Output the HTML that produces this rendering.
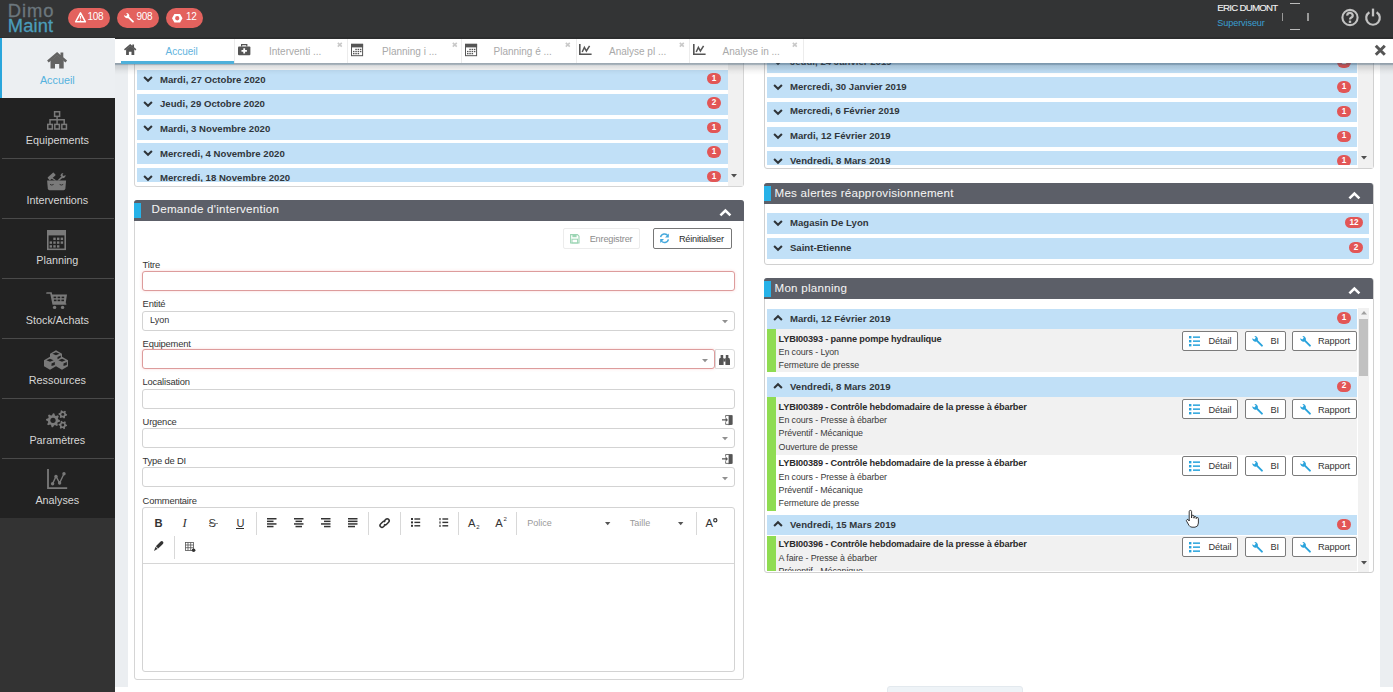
<!DOCTYPE html><html><head><meta charset="utf-8"><style>
*{box-sizing:border-box;margin:0;padding:0}
html,body{width:1393px;height:692px;overflow:hidden;background:#fff;font-family:"Liberation Sans",sans-serif;color:#333}
.a{position:absolute}
svg{position:absolute;overflow:visible}
.nw{white-space:nowrap}
#hdr{left:0;top:0;width:1393px;height:38px;background:#323334}
#side{left:0;top:38px;width:114px;height:654px;background:#333}
.nav{position:absolute;left:0;width:114px;height:60px;background:#222;color:#dcdcdc;font-size:10.6px;text-align:center}
.nav .lbl{position:absolute;left:0;width:114px;top:37px;line-height:12px}
.nav .sep{position:absolute;left:2px;right:0;top:0;height:1px;background:#4b4b4b}
#wrap{left:114px;top:38px;width:1279px;height:649px;background:#ebeef1}
#content{left:128px;top:38px;width:1252px;height:649px;background:#fff}
.panel{position:absolute;border:1px solid #d4d4d4;border-radius:3px;background:#fff}
.ph{position:absolute;height:21px;background:#5b5e67;border-radius:3px 3px 0 0;color:#fff;font-size:12.3px}
.ph .acc{position:absolute;left:0;top:2px;width:7px;height:17px;background:#27b1e6}
.ph .t{position:absolute;left:17px;top:3px;line-height:14px;white-space:nowrap}
.row{position:absolute;height:20.5px;background:#c0e0f7;color:#2f3438;font-weight:bold;font-size:10px;letter-spacing:-0.2px}
.row .t{position:absolute;left:23px;top:4px;line-height:12px;white-space:nowrap}
.badge{position:absolute;height:11px;border-radius:6px;background:#e25656;color:#fff;font-size:8px;font-weight:bold;text-align:center;line-height:11px;letter-spacing:0}
.lab{position:absolute;font-size:9px;color:#333;line-height:10px;white-space:nowrap}
.inp{position:absolute;height:19.5px;border:1px solid #d0d0d0;border-radius:3px;background:#fff}
.inp.red{border-color:#ec8f8f}
.btn{position:absolute;height:20px;border:1px solid #777;border-radius:2px;background:#fff;font-size:9px;color:#333;white-space:nowrap}
.it{position:absolute;font-size:8.9px;color:#333;line-height:13px;white-space:nowrap}
.it b{font-weight:bold}
.tab{position:absolute;top:0;height:25px;width:113.5px;border-right:1px solid #e6e6e6}
.tab .t{position:absolute;top:7px;font-size:10.2px;color:#aaa;white-space:nowrap;line-height:12px}
</style></head><body>
<div id="wrap" class="a"></div><div id="content" class="a"></div>
<div class="a" style="left:0px;top:0px;width:1393px;height:39px;background:#333435"></div>
<div class="a" style="left:0px;top:37.2px;width:1393px;height:1.8px;background:#2c2d2e"></div>
<div class="a nw " style="left:7.8px;top:1.82px;font-size:18.4px;line-height:18.4px;color:#6c777d;letter-spacing:0.95px;-webkit-text-stroke:0.3px #6c777d">Dimo</div>
<div class="a nw " style="left:7.8px;top:17.01px;font-size:18.3px;line-height:18.3px;color:#4b9dbb;letter-spacing:0.15px;-webkit-text-stroke:0.3px #4b9dbb">Maint</div>
<div class="a" style="left:68px;top:8px;width:42px;height:20px;background:#e3625e;border-radius:10px"></div>
<div class="a" style="left:117px;top:8px;width:42px;height:20px;background:#e3625e;border-radius:10px"></div>
<div class="a" style="left:166px;top:8px;width:37px;height:20px;background:#e3625e;border-radius:10px"></div>
<div class="a nw " style="left:87.6px;top:12.43px;font-size:10px;line-height:10px;color:#fff;letter-spacing:-0.3px">108</div>
<div class="a nw " style="left:136.5px;top:12.43px;font-size:10px;line-height:10px;color:#fff;letter-spacing:-0.3px">908</div>
<div class="a nw " style="left:186.1px;top:12.43px;font-size:10px;line-height:10px;color:#fff;letter-spacing:-0.3px">12</div>
<svg style="left:74.5px;top:12.2px;" width="11" height="10.5" viewBox="0 0 11 10.5"><path d="M5.5 0.8 L10.4 9.8 L0.6 9.8 Z" fill="none" stroke="#fff" stroke-width="1.5" stroke-linejoin="round"/><path d="M5.5 3.8 V6.8 M5.5 7.8 V8.8" stroke="#fff" stroke-width="1.2"/></svg>
<svg style="left:123px;top:11.5px;" width="11.5" height="11.5" viewBox="0 0 12 12"><path d="M1.2 3.2 A3 3 0 0 0 5.2 6.2 L10 11 A1 1 0 0 0 11.3 9.7 L6.5 4.9 A3 3 0 0 0 3.2 1 L4.6 2.6 L3.2 4.4 Z" fill="#fff"/></svg>
<svg style="left:172.2px;top:13.5px;" width="10.5" height="8.5" viewBox="0 0 10.5 8.5"><path fill-rule="evenodd" d="M2.4 0 H8.1 L10.5 4.25 L8.1 8.5 H2.4 L0 4.25 Z M5.25 2.1 A2.15 2.15 0 1 0 5.25 6.4 A2.15 2.15 0 1 0 5.25 2.1 Z" fill="#fff"/></svg>
<div class="a nw " style="left:1217.3px;top:2.69px;font-size:9.7px;line-height:9.7px;color:#f2f2f2;letter-spacing:-0.75px;-webkit-text-stroke:0.12px #f2f2f2">ERIC DUMONT</div>
<div class="a nw " style="left:1217.3px;top:18.90px;font-size:9.1px;line-height:9.1px;color:#3a9fd2;letter-spacing:-0.1px">Superviseur</div>
<div class="a" style="left:1290px;top:2.6px;width:9.5px;height:1.4px;background:#bbb"></div>
<div class="a" style="left:1290px;top:28.8px;width:9.5px;height:1.4px;background:#bbb"></div>
<div class="a" style="left:1281.9px;top:13px;width:1.3px;height:8px;background:#999"></div>
<div class="a" style="left:1307.3px;top:13px;width:1.3px;height:8px;background:#999"></div>
<svg style="left:1341px;top:8.6px;" width="18" height="17" viewBox="0 0 18 17"><circle cx="9" cy="8.5" r="7.6" fill="none" stroke="#c2c2c2" stroke-width="2.1"/><path d="M6.3 6.6 A2.7 2.5 0 1 1 10 8.7 Q9 9.3 9 10.6" fill="none" stroke="#c2c2c2" stroke-width="2.2"/><rect x="7.8" y="11.6" width="2.4" height="2.3" fill="#c2c2c2"/></svg>
<svg style="left:1364.6px;top:8.4px;" width="16" height="17" viewBox="0 0 16 17"><path d="M4.4 4.2 A6.8 6.8 0 1 0 11.6 4.2" fill="none" stroke="#c2c2c2" stroke-width="2.2"/><path d="M8 0.6 V8.4" stroke="#c2c2c2" stroke-width="2.3"/></svg>
<div class="a" style="left:0px;top:38px;width:114.6px;height:654px;background:#333"></div>
<div class="a" style="left:0px;top:38px;width:114.6px;height:60px;background:#eceff2"></div>
<div class="a" style="left:0px;top:38px;width:1.5px;height:60px;background:#2aa6dc"></div>
<div class="a nw" style="left:-42.70px;width:200px;text-align:center;top:75.06px;font-size:10.8px;line-height:10.8px;color:#55b2de;letter-spacing:0px">Accueil</div>
<div class="a" style="left:0px;top:98px;width:114.6px;height:60px;background:#222"></div>
<div class="a nw" style="left:-42.70px;width:200px;text-align:center;top:135.06px;font-size:10.8px;line-height:10.8px;color:#d6d6d6;letter-spacing:0px">Equipements</div>
<div class="a" style="left:0px;top:158px;width:114.6px;height:60px;background:#222"></div>
<div class="a" style="left:2px;top:158px;width:112px;height:1px;background:#4a4a4a"></div>
<div class="a nw" style="left:-42.70px;width:200px;text-align:center;top:195.06px;font-size:10.8px;line-height:10.8px;color:#d6d6d6;letter-spacing:0px">Interventions</div>
<div class="a" style="left:0px;top:218px;width:114.6px;height:60px;background:#222"></div>
<div class="a" style="left:2px;top:218px;width:112px;height:1px;background:#4a4a4a"></div>
<div class="a nw" style="left:-42.70px;width:200px;text-align:center;top:255.06px;font-size:10.8px;line-height:10.8px;color:#d6d6d6;letter-spacing:0px">Planning</div>
<div class="a" style="left:0px;top:278px;width:114.6px;height:60px;background:#222"></div>
<div class="a" style="left:2px;top:278px;width:112px;height:1px;background:#4a4a4a"></div>
<div class="a nw" style="left:-42.70px;width:200px;text-align:center;top:315.06px;font-size:10.8px;line-height:10.8px;color:#d6d6d6;letter-spacing:0px">Stock/Achats</div>
<div class="a" style="left:0px;top:338px;width:114.6px;height:60px;background:#222"></div>
<div class="a" style="left:2px;top:338px;width:112px;height:1px;background:#4a4a4a"></div>
<div class="a nw" style="left:-42.70px;width:200px;text-align:center;top:375.06px;font-size:10.8px;line-height:10.8px;color:#d6d6d6;letter-spacing:0px">Ressources</div>
<div class="a" style="left:0px;top:398px;width:114.6px;height:60px;background:#222"></div>
<div class="a" style="left:2px;top:398px;width:112px;height:1px;background:#4a4a4a"></div>
<div class="a nw" style="left:-42.70px;width:200px;text-align:center;top:435.06px;font-size:10.8px;line-height:10.8px;color:#d6d6d6;letter-spacing:0px">Paramètres</div>
<div class="a" style="left:0px;top:458px;width:114.6px;height:60px;background:#222"></div>
<div class="a" style="left:2px;top:458px;width:112px;height:1px;background:#4a4a4a"></div>
<div class="a nw" style="left:-42.70px;width:200px;text-align:center;top:495.06px;font-size:10.8px;line-height:10.8px;color:#d6d6d6;letter-spacing:0px">Analyses</div>
<svg style="left:46.6px;top:51.9px;" width="20.2" height="16.6" viewBox="0 0 20 16.6"><path d="M0 8.6 L10 0 L13.4 2.9 V0.6 H16.2 V5.3 L20 8.6 L18.4 10.4 L10 3.4 L1.6 10.4 Z" fill="#636363"/><path d="M3.4 8.4 L10 2.9 L16.6 8.4 V16.6 H12.1 V12 H7.9 V16.6 H3.4 Z" fill="#636363"/></svg>
<svg style="left:46.7px;top:110.9px;" width="20.2" height="18.8" viewBox="0 0 20.2 18.8"><g fill="none" stroke="#7a7a7a" stroke-width="1.5"><rect x="7.6" y="0.75" width="5" height="4.6"/><rect x="0.75" y="13.4" width="4.6" height="4.6"/><rect x="7.8" y="13.4" width="4.6" height="4.6"/><rect x="14.85" y="13.4" width="4.6" height="4.6"/><path d="M10.1 5.4 V13.4 M3 13.4 V8.8 H17.2 V13.4"/></g></svg>
<svg style="left:47px;top:172.8px;" width="19.2" height="17.2" viewBox="0 0 19.2 17.2"><path d="M0.1 7.6 H19.1 L18.4 15.6 Q18.2 17.2 16.6 17.2 H2.6 Q1 17.2 0.8 15.6 Z" fill="#7a7a7a"/><path d="M3 11.4 Q4.8 12.8 6.6 11.4 M12.6 11.4 Q14.4 12.8 16.2 11.4" fill="none" stroke="#2a2a2a" stroke-width="0.9"/><g transform="rotate(-42 4.6 3.4)"><rect x="0.6" y="1.6" width="8" height="3.6" rx="0.6" fill="#7a7a7a"/></g><path d="M5.2 4.4 L9.4 7.6 L7.6 7.6 L4 5.2 Z" fill="#7a7a7a"/><path d="M10.4 7.6 L14.4 3.6 L15.6 4.8 L12.4 7.6 Z" fill="#7a7a7a"/><path d="M13.4 2.6 A2.9 2.9 0 0 1 16.4 0 L15.4 1.9 L16.6 3.1 L18.6 2 A2.9 2.9 0 0 1 15.6 5.2 Z" fill="#7a7a7a"/></svg>
<svg style="left:46.7px;top:229.9px;" width="19" height="20.1" viewBox="0 0 19 20.1"><rect x="0.8" y="0.8" width="17.4" height="18.5" fill="none" stroke="#7a7a7a" stroke-width="1.6"/><rect x="0" y="0.8" width="19" height="4.6" fill="#7a7a7a"/><rect x="6.3" y="7.6" width="2.4" height="2.4" fill="#7a7a7a"/><rect x="10.0" y="7.6" width="2.4" height="2.4" fill="#7a7a7a"/><rect x="13.7" y="7.6" width="2.4" height="2.4" fill="#7a7a7a"/><rect x="2.6" y="11.4" width="2.4" height="2.4" fill="#7a7a7a"/><rect x="6.3" y="11.4" width="2.4" height="2.4" fill="#7a7a7a"/><rect x="10.0" y="11.4" width="2.4" height="2.4" fill="#7a7a7a"/><rect x="13.7" y="11.4" width="2.4" height="2.4" fill="#7a7a7a"/><rect x="2.6" y="15.2" width="2.4" height="2.4" fill="#7a7a7a"/><rect x="6.3" y="15.2" width="2.4" height="2.4" fill="#7a7a7a"/><rect x="10.0" y="15.2" width="2.4" height="2.4" fill="#7a7a7a"/></svg>
<svg style="left:46.7px;top:291.8px;" width="20.2" height="17.2" viewBox="0 0 20.2 17.2"><path d="M0 1 H4 L6.2 12 H18.6" fill="none" stroke="#7a7a7a" stroke-width="1.7" stroke-linecap="round"/><path d="M4.6 2.6 H20 L18.6 12 H6.4 Z" fill="#7a7a7a"/><g fill="#222"><rect x="6.6" y="4.6" width="2.6" height="1.6"/><rect x="10.6" y="4.6" width="2.6" height="1.6"/><rect x="14.6" y="4.6" width="2.6" height="1.6"/><rect x="6.9" y="7.6" width="2.6" height="1.6"/><rect x="10.6" y="7.6" width="2.6" height="1.6"/><rect x="14.4" y="7.6" width="2.6" height="1.6"/></g><circle cx="7.6" cy="15.4" r="1.7" fill="#7a7a7a"/><circle cx="15.6" cy="15.4" r="1.7" fill="#7a7a7a"/></svg>
<svg style="left:44.1px;top:349.6px;" width="24.1" height="20.1" viewBox="0 0 24.1 20.1"><path d="M12 0.3 L18 3.7799999999999994 L18 9.78 L12 13.259999999999998 L6 9.78 L6 3.7799999999999994 Z" fill="#7a7a7a"/><path d="M12 2.214 L15.6 3.7799999999999994 L12 5.345999999999999 L8.4 3.7799999999999994 Z" fill="#222"/><path d="M13.5 6.911999999999999 L16.8 5.519999999999999 L16.8 8.58 L13.5 9.575999999999999 Z" fill="#222"/><path d="M6 6.8 L12 10.28 L12 16.28 L6 19.759999999999998 L0 16.28 L0 10.28 Z" fill="#7a7a7a"/><path d="M6 8.714 L9.6 10.28 L6 11.846 L2.4000000000000004 10.28 Z" fill="#222"/><path d="M7.5 13.411999999999999 L10.8 12.02 L10.8 15.08 L7.5 16.076 Z" fill="#222"/><path d="M18 6.8 L24 10.28 L24 16.28 L18 19.759999999999998 L12 16.28 L12 10.28 Z" fill="#7a7a7a"/><path d="M18 8.714 L21.6 10.28 L18 11.846 L14.4 10.28 Z" fill="#222"/><path d="M19.5 13.411999999999999 L22.8 12.02 L22.8 15.08 L19.5 16.076 Z" fill="#222"/></svg>
<svg style="left:46px;top:410.2px;" width="21.2" height="19.5" viewBox="0 0 21.2 19.5"><path d="M14.00 10.30 L13.87 11.67 L11.80 12.29 L11.32 13.19 L11.95 15.25 L10.89 16.12 L8.99 15.10 L8.01 15.40 L7.00 17.30 L5.63 17.17 L5.01 15.10 L4.11 14.62 L2.05 15.25 L1.18 14.19 L2.20 12.29 L1.90 11.31 L0.00 10.30 L0.13 8.93 L2.20 8.31 L2.68 7.41 L2.05 5.35 L3.11 4.48 L5.01 5.50 L5.99 5.20 L7.00 3.30 L8.37 3.43 L8.99 5.50 L9.89 5.98 L11.95 5.35 L12.82 6.41 L11.80 8.31 L12.10 9.29 Z" fill="#7a7a7a"/><circle cx="7" cy="10.3" r="2.6" fill="#222"/><path d="M21.10 4.40 L20.95 5.51 L19.48 5.95 L18.99 6.59 L18.95 8.12 L17.91 8.55 L16.80 7.50 L16.00 7.39 L14.65 8.12 L13.76 7.44 L14.12 5.95 L13.81 5.20 L12.50 4.40 L12.65 3.29 L14.12 2.85 L14.61 2.21 L14.65 0.68 L15.69 0.25 L16.80 1.30 L17.60 1.41 L18.95 0.68 L19.84 1.36 L19.48 2.85 L19.79 3.60 Z" fill="#7a7a7a"/><circle cx="16.8" cy="4.4" r="1.4" fill="#222"/><path d="M21.10 15.00 L20.95 16.11 L19.48 16.55 L18.99 17.19 L18.95 18.72 L17.91 19.15 L16.80 18.10 L16.00 17.99 L14.65 18.72 L13.76 18.04 L14.12 16.55 L13.81 15.80 L12.50 15.00 L12.65 13.89 L14.12 13.45 L14.61 12.81 L14.65 11.28 L15.69 10.85 L16.80 11.90 L17.60 12.01 L18.95 11.28 L19.84 11.96 L19.48 13.45 L19.79 14.20 Z" fill="#7a7a7a"/><circle cx="16.8" cy="15" r="1.4" fill="#222"/></svg>
<svg style="left:46.7px;top:468.9px;" width="20.2" height="20.1" viewBox="0 0 20.2 20.1"><path d="M1 0 V19.1 H20.2" fill="none" stroke="#7a7a7a" stroke-width="1.8"/><path d="M5.6 14.8 L9 7.4 L12.6 14 L17 4.8" fill="none" stroke="#7a7a7a" stroke-width="1.4"/><g fill="#7a7a7a"><circle cx="5.6" cy="14.8" r="1.7"/><circle cx="9" cy="7.4" r="1.7"/><circle cx="12.6" cy="14" r="1.7"/><circle cx="17" cy="4.8" r="1.7"/></g></svg>
<div class="a" style="left:134px;top:40px;width:610px;height:146.5px;border:1px solid #d5d5d5;border-radius:3px;background:#fff"></div>
<div class="a" style="left:728px;top:40px;width:15px;height:146px;background:#f1f1f1"></div>
<svg style="left:730.5px;top:173.5px;" width="6" height="4" viewBox="0 0 6 4"><path d="M0 0 H6 L3 3.5 Z" fill="#505050"/></svg>
<div class="a" style="left:135px;top:40px;width:593px;height:142.4px;overflow:hidden">
<div class="a" style="left:1.8px;top:29.599999999999994px;width:591.2px;height:20.9px;background:#c1e0f7"></div>
<svg style="left:8.4px;top:36.199999999999996px;" width="10" height="6" viewBox="0 0 10 6"><path d="M1.1 1.1 L5 4.7 L8.9 1.1" fill="none" stroke="#2f3438" stroke-width="2.1"/></svg>
<div class="a nw " style="left:25.0px;top:34.87px;font-size:9.6px;line-height:9.6px;color:#30363b;font-weight:bold;letter-spacing:0.02px">Mardi, 27 Octobre 2020</div>
<div class="a" style="left:572.0px;top:32.65px;width:14px;height:11.4px;background:#e25656;border-radius:6px"></div>
<div class="a nw" style="left:569.00px;width:20px;text-align:center;top:34.51px;font-size:8.2px;line-height:8.2px;color:#fff;font-weight:bold">1</div>
<div class="a" style="left:1.8px;top:54.19999999999999px;width:591.2px;height:20.9px;background:#c1e0f7"></div>
<svg style="left:8.4px;top:60.79999999999999px;" width="10" height="6" viewBox="0 0 10 6"><path d="M1.1 1.1 L5 4.7 L8.9 1.1" fill="none" stroke="#2f3438" stroke-width="2.1"/></svg>
<div class="a nw " style="left:25.0px;top:59.47px;font-size:9.6px;line-height:9.6px;color:#30363b;font-weight:bold;letter-spacing:0.02px">Jeudi, 29 Octobre 2020</div>
<div class="a" style="left:572.0px;top:57.25px;width:14px;height:11.4px;background:#e25656;border-radius:6px"></div>
<div class="a nw" style="left:569.00px;width:20px;text-align:center;top:59.11px;font-size:8.2px;line-height:8.2px;color:#fff;font-weight:bold">2</div>
<div class="a" style="left:1.8px;top:78.8px;width:591.2px;height:20.9px;background:#c1e0f7"></div>
<svg style="left:8.4px;top:85.39999999999999px;" width="10" height="6" viewBox="0 0 10 6"><path d="M1.1 1.1 L5 4.7 L8.9 1.1" fill="none" stroke="#2f3438" stroke-width="2.1"/></svg>
<div class="a nw " style="left:25.0px;top:84.07px;font-size:9.6px;line-height:9.6px;color:#30363b;font-weight:bold;letter-spacing:0.02px">Mardi, 3 Novembre 2020</div>
<div class="a" style="left:572.0px;top:81.85px;width:14px;height:11.4px;background:#e25656;border-radius:6px"></div>
<div class="a nw" style="left:569.00px;width:20px;text-align:center;top:83.71px;font-size:8.2px;line-height:8.2px;color:#fff;font-weight:bold">1</div>
<div class="a" style="left:1.8px;top:103.4px;width:591.2px;height:20.9px;background:#c1e0f7"></div>
<svg style="left:8.4px;top:110.0px;" width="10" height="6" viewBox="0 0 10 6"><path d="M1.1 1.1 L5 4.7 L8.9 1.1" fill="none" stroke="#2f3438" stroke-width="2.1"/></svg>
<div class="a nw " style="left:25.0px;top:108.67px;font-size:9.6px;line-height:9.6px;color:#30363b;font-weight:bold;letter-spacing:0.02px">Mercredi, 4 Novembre 2020</div>
<div class="a" style="left:572.0px;top:106.45px;width:14px;height:11.4px;background:#e25656;border-radius:6px"></div>
<div class="a nw" style="left:569.00px;width:20px;text-align:center;top:108.31px;font-size:8.2px;line-height:8.2px;color:#fff;font-weight:bold">1</div>
<div class="a" style="left:1.8px;top:128.0px;width:591.2px;height:20.9px;background:#c1e0f7"></div>
<svg style="left:8.4px;top:134.6px;" width="10" height="6" viewBox="0 0 10 6"><path d="M1.1 1.1 L5 4.7 L8.9 1.1" fill="none" stroke="#2f3438" stroke-width="2.1"/></svg>
<div class="a nw " style="left:25.0px;top:133.27px;font-size:9.6px;line-height:9.6px;color:#30363b;font-weight:bold;letter-spacing:0.02px">Mercredi, 18 Novembre 2020</div>
<div class="a" style="left:572.0px;top:131.05px;width:14px;height:11.4px;background:#e25656;border-radius:6px"></div>
<div class="a nw" style="left:569.00px;width:20px;text-align:center;top:132.91px;font-size:8.2px;line-height:8.2px;color:#fff;font-weight:bold">1</div>
</div>
<div class="a" style="left:764px;top:40px;width:609.8px;height:129px;border:1px solid #d0d0d0;border-radius:3px;background:#fff"></div>
<div class="a" style="left:1358px;top:40px;width:14.5px;height:128px;background:#f1f1f1"></div>
<svg style="left:1360.5px;top:156px;" width="6" height="4" viewBox="0 0 6 4"><path d="M0 0 H6 L3 3.5 Z" fill="#505050"/></svg>
<div class="a" style="left:765px;top:40px;width:593px;height:125px;overflow:hidden">
<div class="a" style="left:1.7px;top:12.5px;width:590.8px;height:20.5px;background:#c1e0f7"></div>
<svg style="left:8.299999999999999px;top:19.1px;" width="10" height="6" viewBox="0 0 10 6"><path d="M1.1 1.1 L5 4.7 L8.9 1.1" fill="none" stroke="#2f3438" stroke-width="2.1"/></svg>
<div class="a nw " style="left:24.9px;top:16.97px;font-size:9.6px;line-height:9.6px;color:#30363b;font-weight:bold;letter-spacing:0.02px">Jeudi, 24 Janvier 2019</div>
<div class="a" style="left:572.0px;top:16.45px;width:14px;height:11.4px;background:#e25656;border-radius:6px"></div>
<div class="a nw" style="left:569.00px;width:20px;text-align:center;top:18.31px;font-size:8.2px;line-height:8.2px;color:#fff;font-weight:bold">1</div>
<div class="a" style="left:1.7px;top:37.2px;width:590.8px;height:20.5px;background:#c1e0f7"></div>
<svg style="left:8.299999999999999px;top:43.800000000000004px;" width="10" height="6" viewBox="0 0 10 6"><path d="M1.1 1.1 L5 4.7 L8.9 1.1" fill="none" stroke="#2f3438" stroke-width="2.1"/></svg>
<div class="a nw " style="left:24.9px;top:41.67px;font-size:9.6px;line-height:9.6px;color:#30363b;font-weight:bold;letter-spacing:0.02px">Mercredi, 30 Janvier 2019</div>
<div class="a" style="left:572.0px;top:41.15px;width:14px;height:11.4px;background:#e25656;border-radius:6px"></div>
<div class="a nw" style="left:569.00px;width:20px;text-align:center;top:43.01px;font-size:8.2px;line-height:8.2px;color:#fff;font-weight:bold">1</div>
<div class="a" style="left:1.7px;top:61.900000000000006px;width:590.8px;height:20.5px;background:#c1e0f7"></div>
<svg style="left:8.299999999999999px;top:68.5px;" width="10" height="6" viewBox="0 0 10 6"><path d="M1.1 1.1 L5 4.7 L8.9 1.1" fill="none" stroke="#2f3438" stroke-width="2.1"/></svg>
<div class="a nw " style="left:24.9px;top:66.37px;font-size:9.6px;line-height:9.6px;color:#30363b;font-weight:bold;letter-spacing:0.02px">Mercredi, 6 Février 2019</div>
<div class="a" style="left:572.0px;top:65.85px;width:14px;height:11.4px;background:#e25656;border-radius:6px"></div>
<div class="a nw" style="left:569.00px;width:20px;text-align:center;top:67.71px;font-size:8.2px;line-height:8.2px;color:#fff;font-weight:bold">1</div>
<div class="a" style="left:1.7px;top:86.6px;width:590.8px;height:20.5px;background:#c1e0f7"></div>
<svg style="left:8.299999999999999px;top:93.19999999999999px;" width="10" height="6" viewBox="0 0 10 6"><path d="M1.1 1.1 L5 4.7 L8.9 1.1" fill="none" stroke="#2f3438" stroke-width="2.1"/></svg>
<div class="a nw " style="left:24.9px;top:91.07px;font-size:9.6px;line-height:9.6px;color:#30363b;font-weight:bold;letter-spacing:0.02px">Mardi, 12 Février 2019</div>
<div class="a" style="left:572.0px;top:90.55px;width:14px;height:11.4px;background:#e25656;border-radius:6px"></div>
<div class="a nw" style="left:569.00px;width:20px;text-align:center;top:92.41px;font-size:8.2px;line-height:8.2px;color:#fff;font-weight:bold">1</div>
<div class="a" style="left:1.7px;top:111.30000000000001px;width:590.8px;height:20.5px;background:#c1e0f7"></div>
<svg style="left:8.299999999999999px;top:117.9px;" width="10" height="6" viewBox="0 0 10 6"><path d="M1.1 1.1 L5 4.7 L8.9 1.1" fill="none" stroke="#2f3438" stroke-width="2.1"/></svg>
<div class="a nw " style="left:24.9px;top:115.77px;font-size:9.6px;line-height:9.6px;color:#30363b;font-weight:bold;letter-spacing:0.02px">Vendredi, 8 Mars 2019</div>
<div class="a" style="left:572.0px;top:115.25px;width:14px;height:11.4px;background:#e25656;border-radius:6px"></div>
<div class="a nw" style="left:569.00px;width:20px;text-align:center;top:117.11px;font-size:8.2px;line-height:8.2px;color:#fff;font-weight:bold">1</div>
</div>
<div class="a" style="left:764px;top:182.5px;width:609.8px;height:82.3px;border:1px solid #d0d0d0;border-radius:3px;background:#fff"></div>
<div class="a" style="left:764px;top:183.2px;width:609px;height:21px;background:#5c5f68;border-radius:3px 3px 0 0"></div>
<div class="a" style="left:764px;top:186.0px;width:6.6px;height:15.4px;background:#27b2e8"></div>
<div class="a nw " style="left:774.5px;top:187.18px;font-size:11.6px;line-height:11.6px;color:#f4f4f4;letter-spacing:0.25px;-webkit-text-stroke:0.05px #f4f4f4">Mes alertes réapprovisionnement</div>
<svg style="left:1348.4px;top:192.1px;" width="12.8" height="7.8" viewBox="0 0 12.8 7.8"><path d="M1.4 6.4 L6.4 1.6 L11.4 6.4" fill="none" stroke="#fff" stroke-width="2.6"/></svg>
<div class="a" style="left:766.7px;top:213px;width:602.3px;height:20.5px;background:#c1e0f7"></div>
<svg style="left:773.3000000000001px;top:219.6px;" width="10" height="6" viewBox="0 0 10 6"><path d="M1.1 1.1 L5 4.7 L8.9 1.1" fill="none" stroke="#2f3438" stroke-width="2.1"/></svg>
<div class="a nw " style="left:789.9000000000001px;top:218.27px;font-size:9.6px;line-height:9.6px;color:#30363b;font-weight:bold;letter-spacing:0.02px">Magasin De Lyon</div>
<div class="a" style="left:1345.0px;top:216.95px;width:18px;height:11.4px;background:#e25656;border-radius:6px"></div>
<div class="a nw" style="left:1344.00px;width:20px;text-align:center;top:218.81px;font-size:8.2px;line-height:8.2px;color:#fff;font-weight:bold">12</div>
<div class="a" style="left:766.7px;top:238px;width:602.3px;height:20.5px;background:#c1e0f7"></div>
<svg style="left:773.3000000000001px;top:244.6px;" width="10" height="6" viewBox="0 0 10 6"><path d="M1.1 1.1 L5 4.7 L8.9 1.1" fill="none" stroke="#2f3438" stroke-width="2.1"/></svg>
<div class="a nw " style="left:789.9000000000001px;top:243.27px;font-size:9.6px;line-height:9.6px;color:#30363b;font-weight:bold;letter-spacing:0.02px">Saint-Etienne</div>
<div class="a" style="left:1349.0px;top:241.95px;width:14px;height:11.4px;background:#e25656;border-radius:6px"></div>
<div class="a nw" style="left:1346.00px;width:20px;text-align:center;top:243.81px;font-size:8.2px;line-height:8.2px;color:#fff;font-weight:bold">2</div>
<div class="a" style="left:764px;top:278.2px;width:609.8px;height:295.2px;border:1px solid #d0d0d0;border-radius:3px;background:#fff"></div>
<div class="a" style="left:764px;top:278.4px;width:609px;height:21px;background:#5c5f68;border-radius:3px 3px 0 0"></div>
<div class="a" style="left:764px;top:281.2px;width:6.6px;height:15.4px;background:#27b2e8"></div>
<div class="a nw " style="left:774.5px;top:282.38px;font-size:11.6px;line-height:11.6px;color:#f4f4f4;letter-spacing:0.25px;-webkit-text-stroke:0.05px #f4f4f4">Mon planning</div>
<svg style="left:1348.4px;top:287.29999999999995px;" width="12.8" height="7.8" viewBox="0 0 12.8 7.8"><path d="M1.4 6.4 L6.4 1.6 L11.4 6.4" fill="none" stroke="#fff" stroke-width="2.6"/></svg>
<div class="a" style="left:1358px;top:308px;width:11px;height:264px;background:#f1f1f1"></div>
<div class="a" style="left:1359px;top:319px;width:9px;height:57px;background:#c1c1c1"></div>
<svg style="left:1360.5px;top:311px;" width="6" height="4" viewBox="0 0 6 4"><path d="M0 3.5 H6 L3 0 Z" fill="#a0a0a0"/></svg>
<svg style="left:1360.5px;top:561px;" width="6" height="4" viewBox="0 0 6 4"><path d="M0 0 H6 L3 3.5 Z" fill="#505050"/></svg>
<div class="a" style="left:765px;top:300px;width:593px;height:270.5px;overflow:hidden">
<div class="a" style="left:1.7000000000000455px;top:8.5px;width:590.8px;height:20px;background:#c1e0f7"></div>
<svg style="left:8.300000000000045px;top:14.9px;" width="10" height="6" viewBox="0 0 10 6"><path d="M1.1 4.9 L5 1.3 L8.9 4.9" fill="none" stroke="#2f3438" stroke-width="2.1"/></svg>
<div class="a nw " style="left:24.900000000000045px;top:13.77px;font-size:9.6px;line-height:9.6px;color:#30363b;font-weight:bold;letter-spacing:0.02px">Mardi, 12 Février 2019</div>
<div class="a" style="left:572.0px;top:12.2px;width:14px;height:11.4px;background:#e25656;border-radius:6px"></div>
<div class="a nw" style="left:569.00px;width:20px;text-align:center;top:14.06px;font-size:8.2px;line-height:8.2px;color:#fff;font-weight:bold">1</div>
<div class="a" style="left:1.7000000000000455px;top:28.5px;width:590.8px;height:43.10000000000002px;background:#f1f1f1"></div>
<div class="a" style="left:1.7000000000000455px;top:28.5px;width:9px;height:43.10000000000002px;background:#8fdc52"></div>
<div class="a nw " style="left:13.600000000000023px;top:34.71px;font-size:9.2px;line-height:9.2px;color:#2b2b2b;font-weight:bold;letter-spacing:-0.15px">LYBI00393 - panne pompe hydraulique</div>
<div class="a nw " style="left:13.600000000000023px;top:48.02px;font-size:8.9px;line-height:8.9px;color:#3a3a3a;letter-spacing:-0.1px">En cours - Lyon</div>
<div class="a nw " style="left:13.600000000000023px;top:61.07px;font-size:8.9px;line-height:8.9px;color:#3a3a3a;letter-spacing:-0.1px">Fermeture de presse</div>
<div class="a" style="left:417px;top:30.899999999999977px;width:56px;height:19.8px;border:1px solid #7b7b7b;border-radius:2px;background:#fff"></div>
<div class="a nw " style="left:443.5px;top:37.21px;font-size:9.2px;line-height:9.2px;color:#333;letter-spacing:-0.1px">Détail</div>
<svg style="left:423.5px;top:35.5px;" width="11" height="10.5" viewBox="0 0 11 10.5"><g fill="#29a3dc"><rect x="0" y="0" width="2.4" height="2.4"/><rect x="0" y="4" width="2.4" height="2.4"/><rect x="0" y="8" width="2.4" height="2.4"/><rect x="4" y="0.4" width="7" height="1.5"/><rect x="4" y="4.4" width="7" height="1.5"/><rect x="4" y="8.4" width="7" height="1.5"/></g></svg>
<div class="a" style="left:479.5px;top:30.899999999999977px;width:41.5px;height:19.8px;border:1px solid #7b7b7b;border-radius:2px;background:#fff"></div>
<div class="a nw " style="left:505.5px;top:37.21px;font-size:9.2px;line-height:9.2px;color:#333;letter-spacing:-0.1px">BI</div>
<svg style="left:485.9000000000001px;top:34.5px;" width="12.6" height="12.6" viewBox="0 0 12 12"><path d="M1.2 3.2 A3 3 0 0 0 5.2 6.2 L10 11 A1 1 0 0 0 11.3 9.7 L6.5 4.9 A3 3 0 0 0 3.2 1 L4.6 2.6 L3.2 4.4 Z" fill="#29a3dc"/></svg>
<div class="a" style="left:527.2px;top:30.899999999999977px;width:64.79999999999995px;height:19.8px;border:1px solid #7b7b7b;border-radius:2px;background:#fff"></div>
<div class="a nw " style="left:553px;top:37.21px;font-size:9.2px;line-height:9.2px;color:#333;letter-spacing:-0.1px">Rapport</div>
<svg style="left:533.6000000000001px;top:34.5px;" width="12.6" height="12.6" viewBox="0 0 12 12"><path d="M1.2 3.2 A3 3 0 0 0 5.2 6.2 L10 11 A1 1 0 0 0 11.3 9.7 L6.5 4.9 A3 3 0 0 0 3.2 1 L4.6 2.6 L3.2 4.4 Z" fill="#29a3dc"/></svg>
<div class="a" style="left:1.7000000000000455px;top:76.89999999999998px;width:590.8px;height:20px;background:#c1e0f7"></div>
<svg style="left:8.300000000000045px;top:83.29999999999998px;" width="10" height="6" viewBox="0 0 10 6"><path d="M1.1 4.9 L5 1.3 L8.9 4.9" fill="none" stroke="#2f3438" stroke-width="2.1"/></svg>
<div class="a nw " style="left:24.900000000000045px;top:82.17px;font-size:9.6px;line-height:9.6px;color:#30363b;font-weight:bold;letter-spacing:0.02px">Vendredi, 8 Mars 2019</div>
<div class="a" style="left:572.0px;top:80.6px;width:14px;height:11.4px;background:#e25656;border-radius:6px"></div>
<div class="a nw" style="left:569.00px;width:20px;text-align:center;top:82.46px;font-size:8.2px;line-height:8.2px;color:#fff;font-weight:bold">2</div>
<div class="a" style="left:1.7000000000000455px;top:96.89999999999998px;width:590.8px;height:57.700000000000045px;background:#f1f1f1"></div>
<div class="a" style="left:1.7000000000000455px;top:96.89999999999998px;width:9px;height:57.700000000000045px;background:#8fdc52"></div>
<div class="a nw " style="left:13.600000000000023px;top:103.11px;font-size:9.2px;line-height:9.2px;color:#2b2b2b;font-weight:bold;letter-spacing:-0.15px">LYBI00389 - Contrôle hebdomadaire de la presse à ébarber</div>
<div class="a nw " style="left:13.600000000000023px;top:116.42px;font-size:8.9px;line-height:8.9px;color:#3a3a3a;letter-spacing:-0.1px">En cours - Presse à ébarber</div>
<div class="a nw " style="left:13.600000000000023px;top:129.47px;font-size:8.9px;line-height:8.9px;color:#3a3a3a;letter-spacing:-0.1px">Préventif - Mécanique</div>
<div class="a nw " style="left:13.600000000000023px;top:142.52px;font-size:8.9px;line-height:8.9px;color:#3a3a3a;letter-spacing:-0.1px">Ouverture de presse</div>
<div class="a" style="left:417px;top:99.29999999999995px;width:56px;height:19.8px;border:1px solid #7b7b7b;border-radius:2px;background:#fff"></div>
<div class="a nw " style="left:443.5px;top:105.61px;font-size:9.2px;line-height:9.2px;color:#333;letter-spacing:-0.1px">Détail</div>
<svg style="left:423.5px;top:103.89999999999998px;" width="11" height="10.5" viewBox="0 0 11 10.5"><g fill="#29a3dc"><rect x="0" y="0" width="2.4" height="2.4"/><rect x="0" y="4" width="2.4" height="2.4"/><rect x="0" y="8" width="2.4" height="2.4"/><rect x="4" y="0.4" width="7" height="1.5"/><rect x="4" y="4.4" width="7" height="1.5"/><rect x="4" y="8.4" width="7" height="1.5"/></g></svg>
<div class="a" style="left:479.5px;top:99.29999999999995px;width:41.5px;height:19.8px;border:1px solid #7b7b7b;border-radius:2px;background:#fff"></div>
<div class="a nw " style="left:505.5px;top:105.61px;font-size:9.2px;line-height:9.2px;color:#333;letter-spacing:-0.1px">BI</div>
<svg style="left:485.9000000000001px;top:102.89999999999998px;" width="12.6" height="12.6" viewBox="0 0 12 12"><path d="M1.2 3.2 A3 3 0 0 0 5.2 6.2 L10 11 A1 1 0 0 0 11.3 9.7 L6.5 4.9 A3 3 0 0 0 3.2 1 L4.6 2.6 L3.2 4.4 Z" fill="#29a3dc"/></svg>
<div class="a" style="left:527.2px;top:99.29999999999995px;width:64.79999999999995px;height:19.8px;border:1px solid #7b7b7b;border-radius:2px;background:#fff"></div>
<div class="a nw " style="left:553px;top:105.61px;font-size:9.2px;line-height:9.2px;color:#333;letter-spacing:-0.1px">Rapport</div>
<svg style="left:533.6000000000001px;top:102.89999999999998px;" width="12.6" height="12.6" viewBox="0 0 12 12"><path d="M1.2 3.2 A3 3 0 0 0 5.2 6.2 L10 11 A1 1 0 0 0 11.3 9.7 L6.5 4.9 A3 3 0 0 0 3.2 1 L4.6 2.6 L3.2 4.4 Z" fill="#29a3dc"/></svg>
<div class="a" style="left:1.7000000000000455px;top:154.60000000000002px;width:590.8px;height:56.39999999999998px;background:#fff"></div>
<div class="a" style="left:1.7000000000000455px;top:154.60000000000002px;width:9px;height:56.39999999999998px;background:#8fdc52"></div>
<div class="a nw " style="left:13.600000000000023px;top:159.31px;font-size:9.2px;line-height:9.2px;color:#2b2b2b;font-weight:bold;letter-spacing:-0.15px">LYBI00389 - Contrôle hebdomadaire de la presse à ébarber</div>
<div class="a nw " style="left:13.600000000000023px;top:172.62px;font-size:8.9px;line-height:8.9px;color:#3a3a3a;letter-spacing:-0.1px">En cours - Presse à ébarber</div>
<div class="a nw " style="left:13.600000000000023px;top:185.67px;font-size:8.9px;line-height:8.9px;color:#3a3a3a;letter-spacing:-0.1px">Préventif - Mécanique</div>
<div class="a nw " style="left:13.600000000000023px;top:198.72px;font-size:8.9px;line-height:8.9px;color:#3a3a3a;letter-spacing:-0.1px">Fermeture de presse</div>
<div class="a" style="left:417px;top:156.10000000000002px;width:56px;height:19.8px;border:1px solid #7b7b7b;border-radius:2px;background:#fff"></div>
<div class="a nw " style="left:443.5px;top:162.41px;font-size:9.2px;line-height:9.2px;color:#333;letter-spacing:-0.1px">Détail</div>
<svg style="left:423.5px;top:160.70000000000005px;" width="11" height="10.5" viewBox="0 0 11 10.5"><g fill="#29a3dc"><rect x="0" y="0" width="2.4" height="2.4"/><rect x="0" y="4" width="2.4" height="2.4"/><rect x="0" y="8" width="2.4" height="2.4"/><rect x="4" y="0.4" width="7" height="1.5"/><rect x="4" y="4.4" width="7" height="1.5"/><rect x="4" y="8.4" width="7" height="1.5"/></g></svg>
<div class="a" style="left:479.5px;top:156.10000000000002px;width:41.5px;height:19.8px;border:1px solid #7b7b7b;border-radius:2px;background:#fff"></div>
<div class="a nw " style="left:505.5px;top:162.41px;font-size:9.2px;line-height:9.2px;color:#333;letter-spacing:-0.1px">BI</div>
<svg style="left:485.9000000000001px;top:159.70000000000005px;" width="12.6" height="12.6" viewBox="0 0 12 12"><path d="M1.2 3.2 A3 3 0 0 0 5.2 6.2 L10 11 A1 1 0 0 0 11.3 9.7 L6.5 4.9 A3 3 0 0 0 3.2 1 L4.6 2.6 L3.2 4.4 Z" fill="#29a3dc"/></svg>
<div class="a" style="left:527.2px;top:156.10000000000002px;width:64.79999999999995px;height:19.8px;border:1px solid #7b7b7b;border-radius:2px;background:#fff"></div>
<div class="a nw " style="left:553px;top:162.41px;font-size:9.2px;line-height:9.2px;color:#333;letter-spacing:-0.1px">Rapport</div>
<svg style="left:533.6000000000001px;top:159.70000000000005px;" width="12.6" height="12.6" viewBox="0 0 12 12"><path d="M1.2 3.2 A3 3 0 0 0 5.2 6.2 L10 11 A1 1 0 0 0 11.3 9.7 L6.5 4.9 A3 3 0 0 0 3.2 1 L4.6 2.6 L3.2 4.4 Z" fill="#29a3dc"/></svg>
<div class="a" style="left:1.7000000000000455px;top:215px;width:590.8px;height:20px;background:#c1e0f7"></div>
<svg style="left:8.300000000000045px;top:221.4px;" width="10" height="6" viewBox="0 0 10 6"><path d="M1.1 4.9 L5 1.3 L8.9 4.9" fill="none" stroke="#2f3438" stroke-width="2.1"/></svg>
<div class="a nw " style="left:24.900000000000045px;top:220.27px;font-size:9.6px;line-height:9.6px;color:#30363b;font-weight:bold;letter-spacing:0.02px">Vendredi, 15 Mars 2019</div>
<div class="a" style="left:572.0px;top:218.7px;width:14px;height:11.4px;background:#e25656;border-radius:6px"></div>
<div class="a nw" style="left:569.00px;width:20px;text-align:center;top:220.56px;font-size:8.2px;line-height:8.2px;color:#fff;font-weight:bold">1</div>
<div class="a" style="left:1.7000000000000455px;top:235.60000000000002px;width:590.8px;height:64.39999999999998px;background:#f1f1f1"></div>
<div class="a" style="left:1.7000000000000455px;top:235.60000000000002px;width:9px;height:64.39999999999998px;background:#8fdc52"></div>
<div class="a nw " style="left:13.600000000000023px;top:240.31px;font-size:9.2px;line-height:9.2px;color:#2b2b2b;font-weight:bold;letter-spacing:-0.15px">LYBI00396 - Contrôle hebdomadaire de la presse à ébarber</div>
<div class="a nw " style="left:13.600000000000023px;top:253.62px;font-size:8.9px;line-height:8.9px;color:#3a3a3a;letter-spacing:-0.1px">A faire - Presse à ébarber</div>
<div class="a nw " style="left:13.600000000000023px;top:266.67px;font-size:8.9px;line-height:8.9px;color:#3a3a3a;letter-spacing:-0.1px">Préventif - Mécanique</div>
<div class="a nw " style="left:13.600000000000023px;top:279.72px;font-size:8.9px;line-height:8.9px;color:#3a3a3a;letter-spacing:-0.1px">Ouverture de presse</div>
<div class="a" style="left:417px;top:237.10000000000002px;width:56px;height:19.8px;border:1px solid #7b7b7b;border-radius:2px;background:#fff"></div>
<div class="a nw " style="left:443.5px;top:243.41px;font-size:9.2px;line-height:9.2px;color:#333;letter-spacing:-0.1px">Détail</div>
<svg style="left:423.5px;top:241.70000000000005px;" width="11" height="10.5" viewBox="0 0 11 10.5"><g fill="#29a3dc"><rect x="0" y="0" width="2.4" height="2.4"/><rect x="0" y="4" width="2.4" height="2.4"/><rect x="0" y="8" width="2.4" height="2.4"/><rect x="4" y="0.4" width="7" height="1.5"/><rect x="4" y="4.4" width="7" height="1.5"/><rect x="4" y="8.4" width="7" height="1.5"/></g></svg>
<div class="a" style="left:479.5px;top:237.10000000000002px;width:41.5px;height:19.8px;border:1px solid #7b7b7b;border-radius:2px;background:#fff"></div>
<div class="a nw " style="left:505.5px;top:243.41px;font-size:9.2px;line-height:9.2px;color:#333;letter-spacing:-0.1px">BI</div>
<svg style="left:485.9000000000001px;top:240.70000000000005px;" width="12.6" height="12.6" viewBox="0 0 12 12"><path d="M1.2 3.2 A3 3 0 0 0 5.2 6.2 L10 11 A1 1 0 0 0 11.3 9.7 L6.5 4.9 A3 3 0 0 0 3.2 1 L4.6 2.6 L3.2 4.4 Z" fill="#29a3dc"/></svg>
<div class="a" style="left:527.2px;top:237.10000000000002px;width:64.79999999999995px;height:19.8px;border:1px solid #7b7b7b;border-radius:2px;background:#fff"></div>
<div class="a nw " style="left:553px;top:243.41px;font-size:9.2px;line-height:9.2px;color:#333;letter-spacing:-0.1px">Rapport</div>
<svg style="left:533.6000000000001px;top:240.70000000000005px;" width="12.6" height="12.6" viewBox="0 0 12 12"><path d="M1.2 3.2 A3 3 0 0 0 5.2 6.2 L10 11 A1 1 0 0 0 11.3 9.7 L6.5 4.9 A3 3 0 0 0 3.2 1 L4.6 2.6 L3.2 4.4 Z" fill="#29a3dc"/></svg>
</div>
<div class="a" style="left:134px;top:200px;width:610px;height:479.5px;border:1px solid #d5d5d5;border-radius:3px;background:#fff"></div>
<div class="a" style="left:134px;top:200.2px;width:610px;height:21px;background:#5c5f68;border-radius:3px 3px 0 0"></div>
<div class="a" style="left:134px;top:203.0px;width:6.6px;height:15.4px;background:#27b2e8"></div>
<div class="a nw " style="left:151.6px;top:203.28px;font-size:11.6px;line-height:11.6px;color:#f4f4f4;letter-spacing:0.25px;-webkit-text-stroke:0.05px #f4f4f4">Demande d'intervention</div>
<svg style="left:719.4px;top:209.1px;" width="12.8" height="7.8" viewBox="0 0 12.8 7.8"><path d="M1.4 6.4 L6.4 1.6 L11.4 6.4" fill="none" stroke="#fff" stroke-width="2.6"/></svg>
<div class="a" style="left:563px;top:228.2px;width:76.6px;height:20.7px;border:1px solid #ececec;border-radius:2px;background:#fff"></div>
<div class="a nw " style="left:589.7px;top:234.71px;font-size:9.2px;line-height:9.2px;color:#8d8d8d;letter-spacing:-0.2px">Enregistrer</div>
<svg style="left:569.8px;top:234px;" width="9.6" height="9.6" viewBox="0 0 9.6 9.6"><path d="M0.6 0.6 H7.4 L9 2.2 V9 H0.6 Z" fill="none" stroke="#9cd5b4" stroke-width="1.1"/><rect x="2.4" y="0.6" width="4.2" height="2.6" fill="#9cd5b4"/><rect x="2" y="5.2" width="5.6" height="3.8" fill="none" stroke="#9cd5b4" stroke-width="1"/></svg>
<div class="a" style="left:652.9px;top:228.2px;width:78.8px;height:20.7px;border:1px solid #777;border-radius:2px;background:#fff"></div>
<div class="a nw " style="left:678.9px;top:234.71px;font-size:9.2px;line-height:9.2px;color:#2b2b2b;letter-spacing:-0.2px">Réinitialiser</div>
<svg style="left:659px;top:233.3px;" width="11" height="10.5" viewBox="0 0 11 10.5"><path d="M1.6 4.2 A4 4 0 0 1 9 3" fill="none" stroke="#45a8dc" stroke-width="1.4"/><path d="M9.8 0.6 V4.4 H6 Z" fill="#45a8dc"/><path d="M9.4 6.3 A4 4 0 0 1 2 7.5" fill="none" stroke="#45a8dc" stroke-width="1.4"/><path d="M1.2 9.9 V6.1 H5 Z" fill="#45a8dc"/></svg>
<div class="a nw " style="left:142.6px;top:259.64px;font-size:9.4px;line-height:9.4px;color:#333;letter-spacing:-0.2px">Titre</div>
<div class="a" style="left:141.8px;top:270.5px;width:593.2px;height:20.2px;border:1px solid #dd9c9c;border-radius:3px;background:#fff;box-shadow:0 0 3px rgba(240,120,120,0.3)"></div>
<div class="a nw " style="left:142.6px;top:298.94px;font-size:9.4px;line-height:9.4px;color:#333;letter-spacing:-0.2px">Entité</div>
<div class="a" style="left:141.8px;top:310.9px;width:593.2px;height:20px;border:1px solid #d3d3d3;border-radius:3px;background:#fff"></div>
<div class="a nw " style="left:150px;top:315.98px;font-size:9px;line-height:9px;color:#333">Lyon</div>
<svg style="left:721.7px;top:319.5px;" width="6" height="3.4" viewBox="0 0 6 3.4"><path d="M0 0 H6 L3.0 3.2 Z" fill="#909090"/></svg>
<div class="a nw " style="left:142.6px;top:338.64px;font-size:9.4px;line-height:9.4px;color:#333;letter-spacing:-0.2px">Equipement</div>
<div class="a" style="left:141.8px;top:349.3px;width:573px;height:20px;border:1px solid #dd9c9c;border-radius:3px;background:#fff;box-shadow:0 0 3px rgba(240,120,120,0.3)"></div>
<svg style="left:701.8px;top:358.90000000000003px;" width="6" height="3.4" viewBox="0 0 6 3.4"><path d="M0 0 H6 L3.0 3.2 Z" fill="#909090"/></svg>
<div class="a" style="left:714.6px;top:349.3px;width:20.4px;height:20px;border:1px solid #dcdcdc;border-radius:0 3px 3px 0;background:#fff"></div>
<svg style="left:719.4px;top:355.3px;" width="11" height="10" viewBox="0 0 11 10"><g fill="#555"><rect x="1.6" y="0" width="2.6" height="3"/><rect x="6.8" y="0" width="2.6" height="3"/><path d="M0.6 3 H4.6 V10 H0 V5 Z"/><path d="M6.4 3 H10.4 L11 5 V10 H6.4 Z"/><rect x="4.4" y="3.6" width="2.2" height="3"/></g></svg>
<div class="a nw " style="left:142.6px;top:377.04px;font-size:9.4px;line-height:9.4px;color:#333;letter-spacing:-0.2px">Localisation</div>
<div class="a" style="left:141.8px;top:388.9px;width:593.2px;height:20px;border:1px solid #d3d3d3;border-radius:3px;background:#fff"></div>
<div class="a nw " style="left:142.6px;top:416.64px;font-size:9.4px;line-height:9.4px;color:#333;letter-spacing:-0.2px">Urgence</div>
<div class="a" style="left:141.8px;top:427.9px;width:593.2px;height:20px;border:1px solid #d3d3d3;border-radius:3px;background:#fff"></div>
<svg style="left:721.7px;top:436.90000000000003px;" width="6" height="3.4" viewBox="0 0 6 3.4"><path d="M0 0 H6 L3.0 3.2 Z" fill="#909090"/></svg>
<div class="a nw " style="left:142.6px;top:455.64px;font-size:9.4px;line-height:9.4px;color:#333;letter-spacing:-0.2px">Type de DI</div>
<div class="a" style="left:141.8px;top:467.4px;width:593.2px;height:20px;border:1px solid #d3d3d3;border-radius:3px;background:#fff"></div>
<svg style="left:721.7px;top:476.5px;" width="6" height="3.4" viewBox="0 0 6 3.4"><path d="M0 0 H6 L3.0 3.2 Z" fill="#909090"/></svg>
<svg style="left:721.8px;top:415px;" width="10.4" height="9.7" viewBox="0 0 10.4 9.7"><path d="M3.6 2.6 V0.5 H10.2 V9.4 H3.6 V7.2" fill="none" stroke="#666" stroke-width="0.9"/><path d="M6.6 0.5 L10.2 0.5 L10.2 9.4 L6.6 10.2 Z" fill="#555"/><path d="M0 4.3 H3.6 V2.6 L6 4.95 L3.6 7.3 V5.6 H0 Z" fill="#555"/></svg>
<svg style="left:721.8px;top:454px;" width="10.4" height="9.7" viewBox="0 0 10.4 9.7"><path d="M3.6 2.6 V0.5 H10.2 V9.4 H3.6 V7.2" fill="none" stroke="#666" stroke-width="0.9"/><path d="M6.6 0.5 L10.2 0.5 L10.2 9.4 L6.6 10.2 Z" fill="#555"/><path d="M0 4.3 H3.6 V2.6 L6 4.95 L3.6 7.3 V5.6 H0 Z" fill="#555"/></svg>
<div class="a nw " style="left:142.6px;top:495.94px;font-size:9.4px;line-height:9.4px;color:#333;letter-spacing:-0.2px">Commentaire</div>
<div class="a" style="left:141.8px;top:507px;width:593.2px;height:164.8px;border:1px solid #d3d3d3;border-radius:3px;background:#fff"></div>
<div class="a" style="left:143px;top:563px;width:591px;height:1px;background:#d6d6d6"></div>
<div class="a nw " style="left:154.6px;top:517.52px;font-size:11.2px;line-height:11.2px;color:#333;font-weight:bold">B</div>
<div class="a nw " style="left:182.6px;top:516.53px;font-size:12.6px;line-height:12.6px;color:#333;font-family:'Liberation Serif';font-style:italic">I</div>
<div class="a nw " style="left:208.6px;top:517.52px;font-size:11.2px;line-height:11.2px;color:#333">S</div>
<div class="a" style="left:209px;top:522.8px;width:9px;height:0.7px;background:#888"></div>
<div class="a nw " style="left:236.4px;top:517.69px;font-size:11px;line-height:11px;color:#333">U</div>
<div class="a" style="left:236.2px;top:528.4px;width:8px;height:1px;background:#333"></div>
<div class="a" style="left:255.5px;top:512px;width:0.9px;height:22.7px;background:#d8d8d8"></div>
<div class="a" style="left:368.4px;top:512px;width:0.9px;height:22.7px;background:#d8d8d8"></div>
<div class="a" style="left:399.5px;top:512px;width:0.9px;height:22.7px;background:#d8d8d8"></div>
<div class="a" style="left:458.4px;top:512px;width:0.9px;height:22.7px;background:#d8d8d8"></div>
<div class="a" style="left:516.2px;top:512px;width:0.9px;height:22.7px;background:#d8d8d8"></div>
<div class="a" style="left:695.7px;top:512px;width:0.9px;height:22.7px;background:#d8d8d8"></div>
<div class="a" style="left:173.8px;top:536.4px;width:0.9px;height:22.8px;background:#d8d8d8"></div>
<svg style="left:266.8px;top:517.8px;" width="9.5" height="9.4" viewBox="0 0 9.5 9.4"><rect x="0" y="0.0" width="9.5" height="1.5" fill="#333"/><rect x="0" y="2.6" width="6.5" height="1.5" fill="#333"/><rect x="0" y="5.2" width="9.5" height="1.5" fill="#333"/><rect x="0" y="7.800000000000001" width="6.5" height="1.5" fill="#333"/></svg>
<svg style="left:293.6px;top:517.8px;" width="9.5" height="9.4" viewBox="0 0 9.5 9.4"><rect x="0.0" y="0.0" width="9.5" height="1.5" fill="#333"/><rect x="1.5" y="2.6" width="6.5" height="1.5" fill="#333"/><rect x="0.0" y="5.2" width="9.5" height="1.5" fill="#333"/><rect x="1.5" y="7.800000000000001" width="6.5" height="1.5" fill="#333"/></svg>
<svg style="left:320.9px;top:517.8px;" width="9.5" height="9.4" viewBox="0 0 9.5 9.4"><rect x="0.0" y="0.0" width="9.5" height="1.5" fill="#333"/><rect x="3.0" y="2.6" width="6.5" height="1.5" fill="#333"/><rect x="0.0" y="5.2" width="9.5" height="1.5" fill="#333"/><rect x="3.0" y="7.800000000000001" width="6.5" height="1.5" fill="#333"/></svg>
<svg style="left:348.1px;top:517.8px;" width="9.5" height="9.4" viewBox="0 0 9.5 9.4"><rect x="0.0" y="0.0" width="9.5" height="1.5" fill="#333"/><rect x="0.0" y="2.6" width="9.5" height="1.5" fill="#333"/><rect x="0.0" y="5.2" width="9.5" height="1.5" fill="#333"/><rect x="0" y="7.800000000000001" width="7" height="1.5" fill="#333"/></svg>
<svg style="left:378.7px;top:517.6px;" width="11.2" height="10.2" viewBox="0 0 11.2 10.2"><g fill="none" stroke="#333" stroke-width="1.5"><path d="M5.2 3 L6.8 1.4 A1.9 1.9 0 0 1 9.6 4.2 L7.6 6.2 A1.9 1.9 0 0 1 5 6.4"/><path d="M6 7.2 L4.4 8.8 A1.9 1.9 0 0 1 1.6 6 L3.6 4 A1.9 1.9 0 0 1 6.2 3.8"/></g></svg>
<svg style="left:411.3px;top:518.2px;" width="9.2" height="9" viewBox="0 0 9.2 9"><rect x="0" y="0.0" width="2" height="2" fill="#333"/><rect x="3.4" y="0.3" width="5.8" height="1.4" fill="#333"/><rect x="0" y="3.4" width="2" height="2" fill="#333"/><rect x="3.4" y="3.6999999999999997" width="5.8" height="1.4" fill="#333"/><rect x="0" y="6.8" width="2" height="2" fill="#333"/><rect x="3.4" y="7.1" width="5.8" height="1.4" fill="#333"/></svg>
<svg style="left:438.6px;top:518.2px;" width="9.2" height="9" viewBox="0 0 9.2 9"><rect x="0.4" y="0.0" width="1.2" height="2.2" fill="#333"/><rect x="3.4" y="0.3" width="5.8" height="1.4" fill="#333"/><rect x="0.4" y="3.4" width="1.2" height="2.2" fill="#333"/><rect x="3.4" y="3.6999999999999997" width="5.8" height="1.4" fill="#333"/><rect x="0.4" y="6.8" width="1.2" height="2.2" fill="#333"/><rect x="3.4" y="7.1" width="5.8" height="1.4" fill="#333"/></svg>
<div class="a nw " style="left:468px;top:517.52px;font-size:11.2px;line-height:11.2px;color:#333">A</div>
<div class="a nw " style="left:476.2px;top:523.52px;font-size:6px;line-height:6px;color:#333">2</div>
<div class="a nw " style="left:495.2px;top:517.52px;font-size:11.2px;line-height:11.2px;color:#333">A</div>
<div class="a nw " style="left:503.6px;top:516.32px;font-size:6px;line-height:6px;color:#333">2</div>
<div class="a nw " style="left:527.3px;top:519.38px;font-size:9px;line-height:9px;color:#999">Police</div>
<svg style="left:605.1px;top:521.5px;" width="5.4" height="3.4" viewBox="0 0 5.4 3.4"><path d="M0 0 H5.4 L2.7 3.2 Z" fill="#555"/></svg>
<div class="a nw " style="left:629.7px;top:519.38px;font-size:9px;line-height:9px;color:#999">Taille</div>
<svg style="left:677.7px;top:521.5px;" width="5.4" height="3.4" viewBox="0 0 5.4 3.4"><path d="M0 0 H5.4 L2.7 3.2 Z" fill="#555"/></svg>
<div class="a nw " style="left:705.4px;top:517.52px;font-size:11.2px;line-height:11.2px;color:#333">A</div>
<svg style="left:713.2px;top:518px;" width="4.6" height="4.6" viewBox="0 0 4.6 4.6"><circle cx="2.3" cy="2.3" r="1.6" fill="none" stroke="#333" stroke-width="1.2"/></svg>
<svg style="left:153.9px;top:541.4px;" width="9.5" height="10" viewBox="0 0 9.5 10"><path d="M6.6 0.6 A1.6 1.6 0 0 1 8.9 2.9 L4.2 7.6 L1.9 5.3 Z" fill="#333"/><path d="M1.6 5.8 L3.7 7.9 L2.6 8.6 L0 10 L0.9 7.4 Z" fill="#333"/></svg>
<svg style="left:185px;top:542px;" width="10.6" height="10" viewBox="0 0 10.6 10"><g fill="none" stroke="#555" stroke-width="0.8"><rect x="0.4" y="0.4" width="8" height="8"/><path d="M3 0.4 V8.4 M5.7 0.4 V8.4 M0.4 3 H8.4 M0.4 5.7 H8.4"/></g><circle cx="8.6" cy="8.2" r="1.8" fill="#333"/></svg>
<div class="a" style="left:114.6px;top:63px;width:1278.4px;height:12px;background:linear-gradient(to bottom, rgba(50,75,95,0.5) 0px, rgba(50,75,95,0.4) 2px, rgba(20,30,40,0.15) 2.6px, rgba(0,0,0,0.1) 5px, rgba(0,0,0,0.04) 8px, rgba(0,0,0,0) 12px)"></div>
<div class="a" style="left:114.6px;top:39px;width:1278.4px;height:24px;background:#fff"></div>
<div class="a" style="left:121px;top:61px;width:112.5px;height:2.6px;background:#4fb0da"></div>
<div class="a" style="left:234px;top:39px;width:1px;height:24px;background:#ececec"></div>
<div class="a nw " style="left:165.5px;top:46.64px;font-size:10px;line-height:10px;color:#62b4de">Accueil</div>
<svg style="left:124.2px;top:44.4px;" width="12.4" height="11" viewBox="0 0 20 17.7"><path d="M0 8.6 L10 0 L13.4 2.9 V0.6 H16.2 V5.3 L20 8.6 L18.4 10.4 L10 3.4 L1.6 10.4 Z" fill="#555"/><path d="M3.4 8.4 L10 2.9 L16.6 8.4 V17.7 H12.1 V12.6 H7.9 V17.7 H3.4 Z" fill="#555"/></svg>
<div class="a" style="left:347.2px;top:39px;width:1px;height:24px;background:#ececec"></div>
<div class="a nw " style="left:269px;top:46.64px;font-size:10px;line-height:10px;color:#a9a9a9">Interventi ...</div>
<svg style="left:237.8px;top:44px;" width="12.4" height="11.2" viewBox="0 0 12.4 11.2"><path d="M3.6 2.6 V0.6 H8.8 V2.6" fill="none" stroke="#555" stroke-width="1.2"/><rect x="0" y="2.6" width="12.4" height="8.6" rx="1" fill="#555"/><path d="M6.2 4.2 V9.6 M3.5 6.9 H8.9" stroke="#fff" stroke-width="1.8"/></svg>
<svg style="left:337.2px;top:41.8px;" width="5.6" height="5.4" viewBox="0 0 5.6 5.4"><path d="M0.8 0.8 L4.8 4.6 M4.8 0.8 L0.8 4.6" stroke="#c9c9c9" stroke-width="1.6"/></svg>
<div class="a" style="left:461.1px;top:39px;width:1px;height:24px;background:#ececec"></div>
<div class="a nw " style="left:382px;top:46.64px;font-size:10px;line-height:10px;color:#a9a9a9">Planning i ...</div>
<svg style="left:351px;top:43px;" width="12.1" height="12.9" viewBox="0 0 12.1 12.9"><rect x="0.5" y="1.2" width="11.1" height="11.5" fill="none" stroke="#555" stroke-width="1"/><rect x="0" y="1" width="12.1" height="3.4" fill="#555"/><rect x="4.3" y="5.8" width="1.5" height="1.3" fill="#555"/><rect x="6.6" y="5.8" width="1.5" height="1.3" fill="#555"/><rect x="8.9" y="5.8" width="1.5" height="1.3" fill="#555"/><rect x="2.0" y="7.9" width="1.5" height="1.3" fill="#555"/><rect x="4.3" y="7.9" width="1.5" height="1.3" fill="#555"/><rect x="6.6" y="7.9" width="1.5" height="1.3" fill="#555"/><rect x="8.9" y="7.9" width="1.5" height="1.3" fill="#555"/><rect x="2.0" y="10.0" width="1.5" height="1.3" fill="#555"/><rect x="4.3" y="10.0" width="1.5" height="1.3" fill="#555"/><rect x="6.6" y="10.0" width="1.5" height="1.3" fill="#555"/></svg>
<svg style="left:451.6px;top:41.8px;" width="5.6" height="5.4" viewBox="0 0 5.6 5.4"><path d="M0.8 0.8 L4.8 4.6 M4.8 0.8 L0.8 4.6" stroke="#c9c9c9" stroke-width="1.6"/></svg>
<div class="a" style="left:575.5px;top:39px;width:1px;height:24px;background:#ececec"></div>
<div class="a nw " style="left:493.5px;top:46.64px;font-size:10px;line-height:10px;color:#a9a9a9">Planning é ...</div>
<svg style="left:464.8px;top:43px;" width="12.1" height="12.9" viewBox="0 0 12.1 12.9"><rect x="0.5" y="1.2" width="11.1" height="11.5" fill="none" stroke="#555" stroke-width="1"/><rect x="0" y="1" width="12.1" height="3.4" fill="#555"/><rect x="4.3" y="5.8" width="1.5" height="1.3" fill="#555"/><rect x="6.6" y="5.8" width="1.5" height="1.3" fill="#555"/><rect x="8.9" y="5.8" width="1.5" height="1.3" fill="#555"/><rect x="2.0" y="7.9" width="1.5" height="1.3" fill="#555"/><rect x="4.3" y="7.9" width="1.5" height="1.3" fill="#555"/><rect x="6.6" y="7.9" width="1.5" height="1.3" fill="#555"/><rect x="8.9" y="7.9" width="1.5" height="1.3" fill="#555"/><rect x="2.0" y="10.0" width="1.5" height="1.3" fill="#555"/><rect x="4.3" y="10.0" width="1.5" height="1.3" fill="#555"/><rect x="6.6" y="10.0" width="1.5" height="1.3" fill="#555"/></svg>
<svg style="left:565.2px;top:41.8px;" width="5.6" height="5.4" viewBox="0 0 5.6 5.4"><path d="M0.8 0.8 L4.8 4.6 M4.8 0.8 L0.8 4.6" stroke="#c9c9c9" stroke-width="1.6"/></svg>
<div class="a" style="left:688.8px;top:39px;width:1px;height:24px;background:#ececec"></div>
<div class="a nw " style="left:609px;top:46.64px;font-size:10px;line-height:10px;color:#a9a9a9">Analyse pl ...</div>
<svg style="left:578.8px;top:44.4px;" width="12.6" height="11" viewBox="0 0 12.6 11"><path d="M0.8 0 V10.2 H12.6" fill="none" stroke="#555" stroke-width="1.6"/><path d="M3.2 8 L5.4 3.4 L7.4 7 L10.6 1.8" fill="none" stroke="#555" stroke-width="1.5"/></svg>
<svg style="left:678.9px;top:41.8px;" width="5.6" height="5.4" viewBox="0 0 5.6 5.4"><path d="M0.8 0.8 L4.8 4.6 M4.8 0.8 L0.8 4.6" stroke="#c9c9c9" stroke-width="1.6"/></svg>
<div class="a" style="left:802.5px;top:39px;width:1px;height:24px;background:#ececec"></div>
<div class="a nw " style="left:722.6px;top:46.64px;font-size:10px;line-height:10px;color:#a9a9a9">Analyse in ...</div>
<svg style="left:692.5px;top:44.4px;" width="12.6" height="11" viewBox="0 0 12.6 11"><path d="M0.8 0 V10.2 H12.6" fill="none" stroke="#555" stroke-width="1.6"/><path d="M3.2 8 L5.4 3.4 L7.4 7 L10.6 1.8" fill="none" stroke="#555" stroke-width="1.5"/></svg>
<svg style="left:792px;top:41.8px;" width="5.6" height="5.4" viewBox="0 0 5.6 5.4"><path d="M0.8 0.8 L4.8 4.6 M4.8 0.8 L0.8 4.6" stroke="#c9c9c9" stroke-width="1.6"/></svg>
<svg style="left:1373.5px;top:44px;" width="12.6" height="12.6" viewBox="0 0 12.6 12.6"><path d="M1.8 1.8 L10.8 10.8 M10.8 1.8 L1.8 10.8" stroke="#555" stroke-width="3"/></svg>
<svg style="left:1186px;top:510px;" width="13" height="18" viewBox="0 0 13 18"><path d="M3.2 1.6 A1.2 1.2 0 0 1 5.6 1.6 V8 V6.4 A1.2 1.2 0 0 1 8 6.4 V8.2 V7.2 A1.2 1.2 0 0 1 10.2 7.2 V8.6 A1.1 1.1 0 0 1 12.4 8.6 V13 Q12.4 16.8 9 17.2 H6 Q4.2 17.2 3 15.4 L0.6 11.2 A1.1 1.1 0 0 1 2.6 10 L3.2 11 Z" fill="#fff" stroke="#222" stroke-width="0.9"/></svg>
<div class="a" style="left:886.5px;top:685.5px;width:136.5px;height:7px;background:#eef3f7;border-radius:3px 3px 0 0;border:1px solid #e3e9ee"></div>
</body></html>
